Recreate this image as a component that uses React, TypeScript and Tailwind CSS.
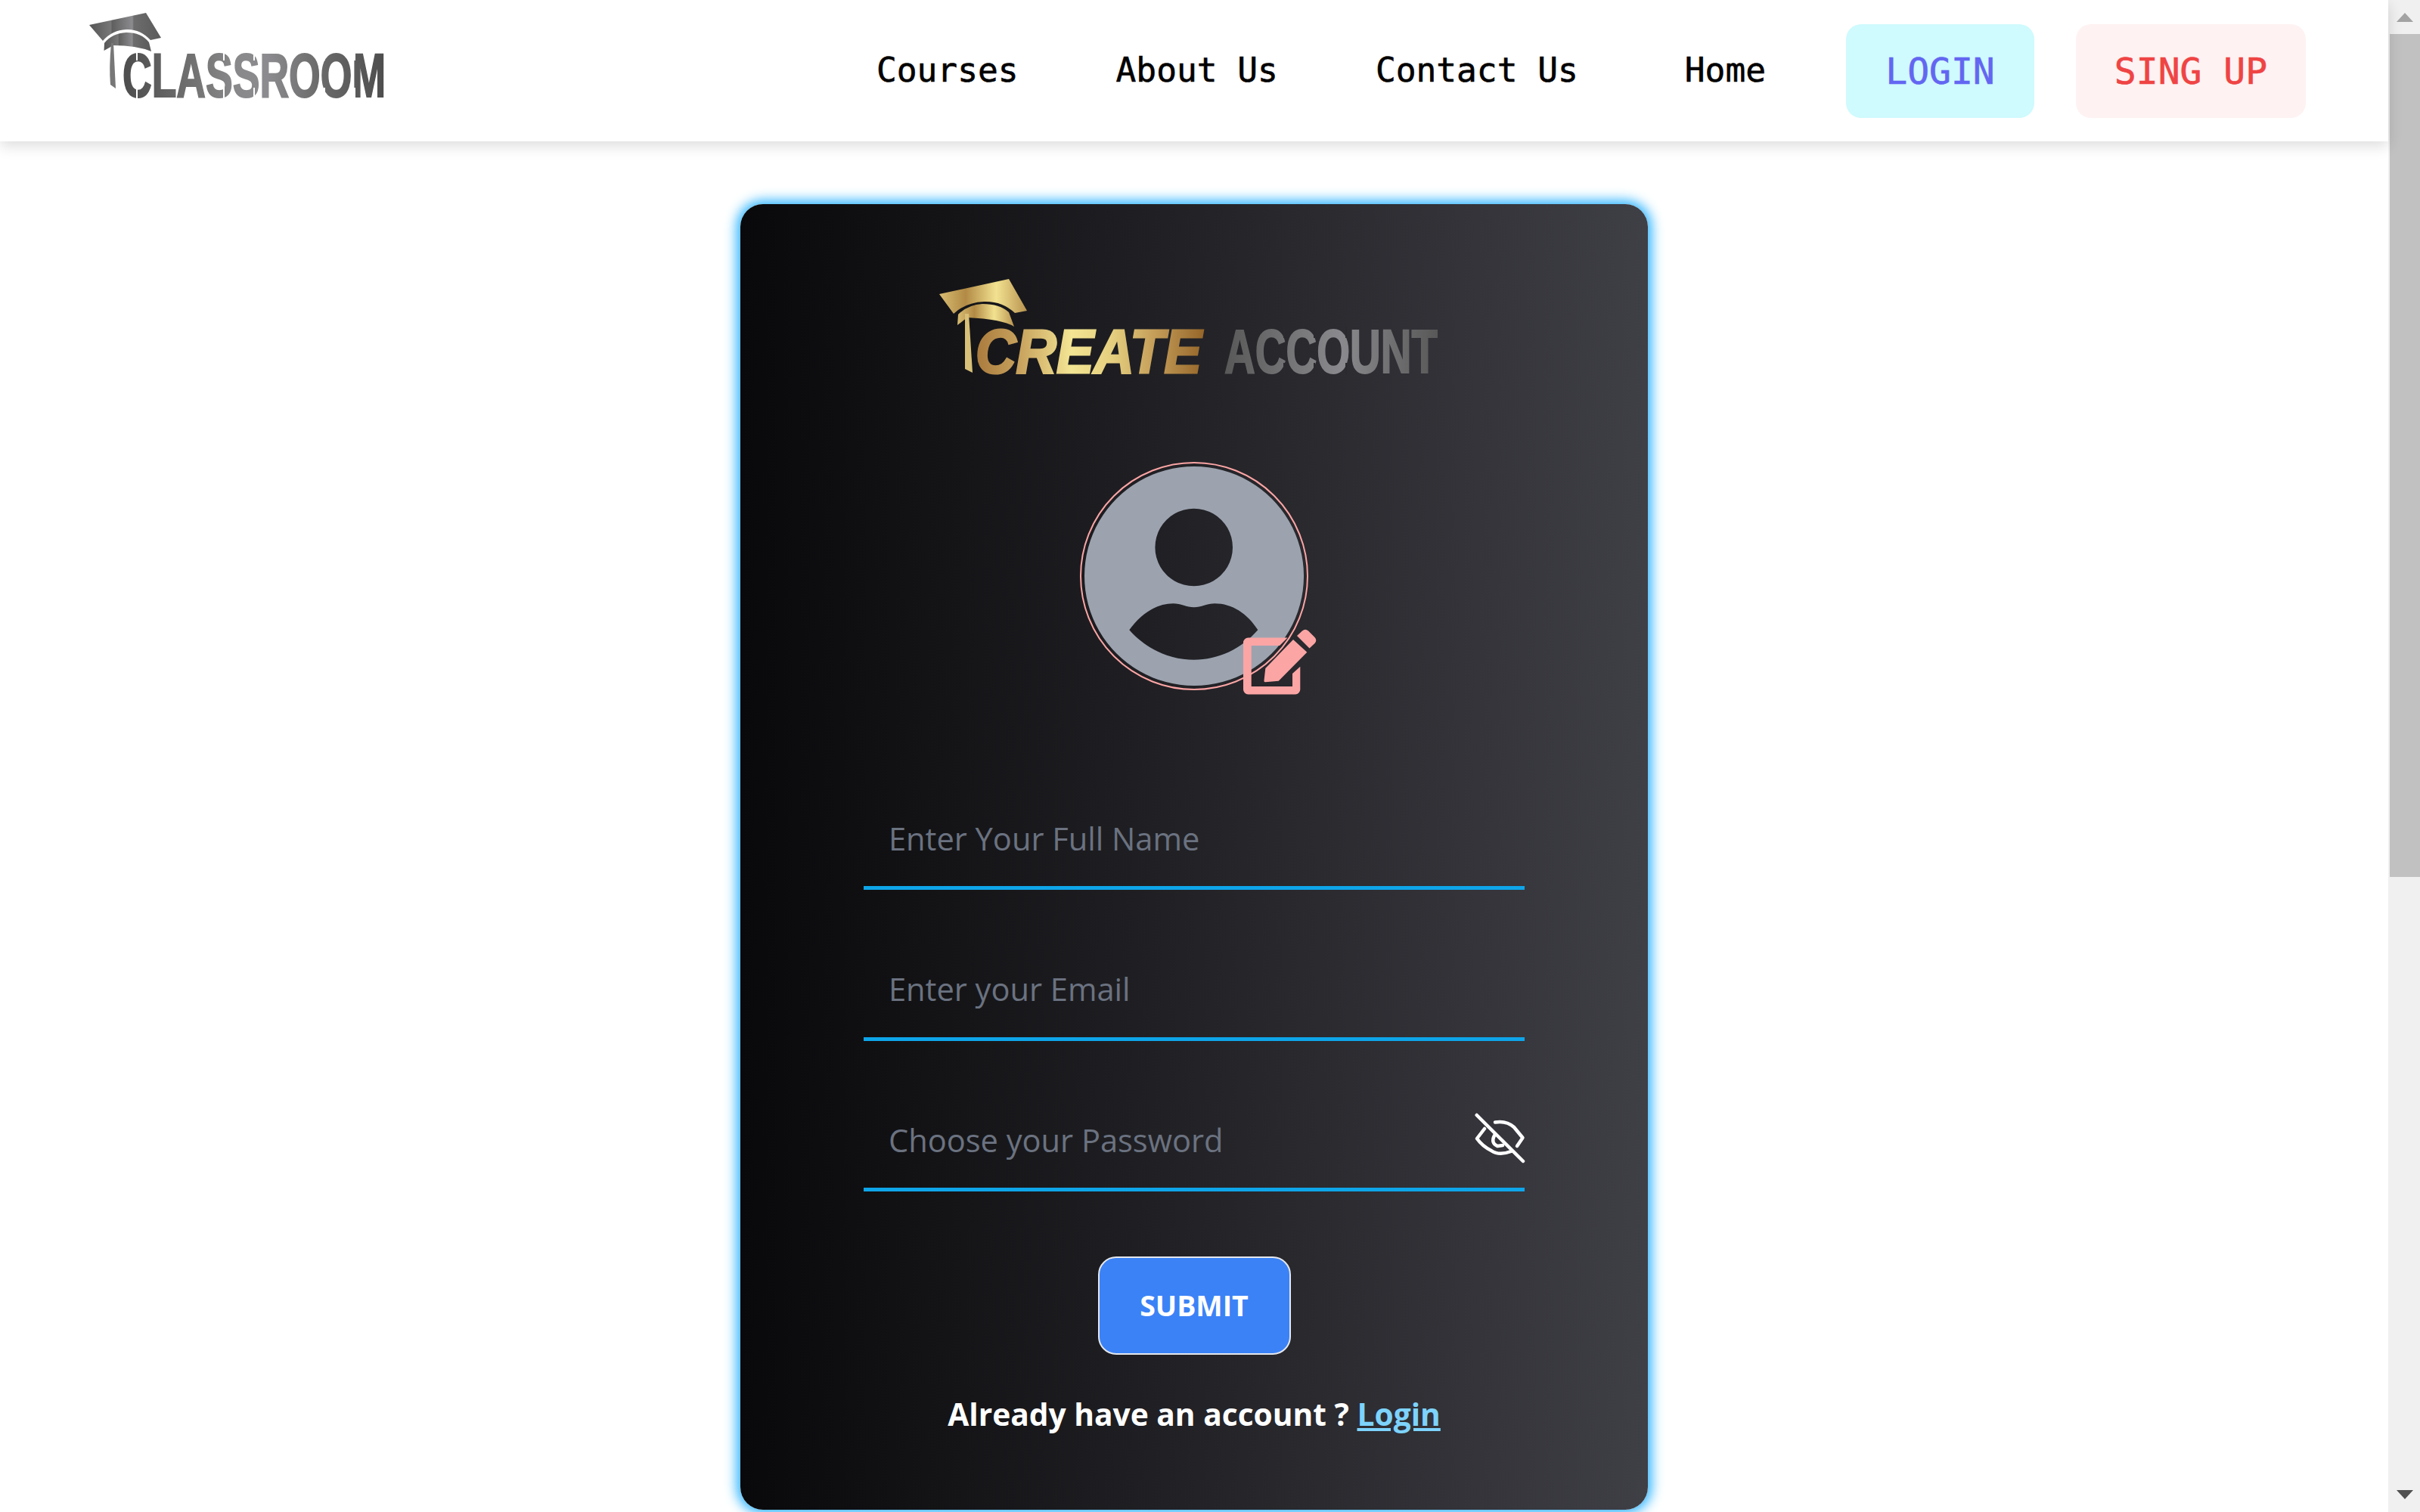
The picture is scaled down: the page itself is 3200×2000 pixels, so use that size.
import React from 'react';

const navLinks = [
  { label: 'Courses', cls: 'ml-[629px]' },
  { label: 'About Us', cls: 'ml-[129px]' },
  { label: 'Contact Us', cls: 'ml-[129px]' },
  { label: 'Home', cls: 'ml-[141px]' },
];

const inputCls =
  'h-[100px] w-full bg-transparent border-b-[5px] border-[#0ea5e9] pl-[33px] pr-[80px] pb-[32px] text-[41.6px] text-white placeholder:text-[#6b7280] outline-none';

const StencilSlits = ({ xs, top, bottom, fill }: { xs: number[]; top: number; bottom: number; fill: string }) => (
  <g fill={fill}>
    {xs.map(x => (
      <React.Fragment key={x}>
        <rect x={x} y={top - 2} width="2" height="15" />
        <rect x={x} y={bottom - 13} width="2" height="15" />
      </React.Fragment>
    ))}
  </g>
);

const ClassroomLogo = () => (
  <svg width="420" height="187" viewBox="110 0 420 187" className="shrink-0">
    <defs>
      <linearGradient id="greyBands" x1="0" x2="1" y1="0" y2="0">
        <stop offset="0" stopColor="#4d4d4d" />
        <stop offset="0.12" stopColor="#5c5c5c" />
        <stop offset="0.25" stopColor="#6f6f6f" />
        <stop offset="0.42" stopColor="#88888a" />
        <stop offset="0.55" stopColor="#8c8c90" />
        <stop offset="0.75" stopColor="#6a6a6a" />
        <stop offset="1" stopColor="#4d4d4d" />
      </linearGradient>
      <linearGradient id="greyCap" x1="0" x2="1" y1="0" y2="0">
        <stop offset="0" stopColor="#555" />
        <stop offset="0.3" stopColor="#777" />
        <stop offset="0.32" stopColor="#5f5f5f" />
        <stop offset="0.6" stopColor="#8c8c90" />
        <stop offset="0.62" stopColor="#6d6d6d" />
        <stop offset="1" stopColor="#5a5a5a" />
      </linearGradient>
    </defs>
    <path d="M118 33 L193 17 L213 50 L199 53 Q185 38 167 39 Q148 40 136 54 Z" fill="url(#greyCap)" />
    <path d="M137.5 67 L138 57 Q148 44 167 43 Q187 43 197 56 L200 68 Q180 60 150 60 Z" fill="url(#greyCap)" />
    <path d="M147 57 L150 57 L153 117 L146 112 Q144 90 147 57 Z" fill="#777" />
    <text
      x="162"
      y="128"
      textLength="348"
      lengthAdjust="spacingAndGlyphs"
      fill="url(#greyBands)"
      stroke="url(#greyBands)"
      strokeWidth="2"
      fontFamily="'Liberation Sans', sans-serif"
      fontWeight="700"
      fontSize="82"
    >
      CLASSROOM
    </text>
    <StencilSlits xs={[180, 295, 335, 428, 468]} top={67} bottom={129} fill="#fff" />
  </svg>
);

const CreateAccountLogo = () => (
  <svg width="680" height="158" viewBox="1239 362 680 158">
    <defs>
      <linearGradient id="goldBands" x1="0" x2="1" y1="0" y2="0">
        <stop offset="0" stopColor="#a97a3c" />
        <stop offset="0.2" stopColor="#c9a45f" />
        <stop offset="0.42" stopColor="#f3e593" />
        <stop offset="0.6" stopColor="#e5cf7f" />
        <stop offset="0.8" stopColor="#c29a56" />
        <stop offset="1" stopColor="#96672a" />
      </linearGradient>
      <linearGradient id="capGold" x1="0" x2="1" y1="0" y2="0">
        <stop offset="0" stopColor="#d8bd72" />
        <stop offset="0.3" stopColor="#b28a45" />
        <stop offset="0.65" stopColor="#f2e290" />
        <stop offset="1" stopColor="#b99350" />
      </linearGradient>
      <linearGradient id="stencilGrey" x1="0" x2="1" y1="0" y2="0">
        <stop offset="0" stopColor="#585858" />
        <stop offset="0.55" stopColor="#8a8a8e" />
        <stop offset="1" stopColor="#585858" />
      </linearGradient>
    </defs>
    <path d="M1242 389 L1334 369 L1358 411 L1342 414 Q1325 398 1301 399 Q1277 400 1261 415 Z" fill="url(#capGold)" />
    <path d="M1266 430 L1267 416 Q1280 403 1299 402 Q1322 402 1334 413 L1341 432 Q1325 422 1279 420 Z" fill="url(#capGold)" />
    <path d="M1276 415 L1281 415 L1286 493 L1276 488 Z" fill="#d9c078" />
    <text
      x="1290"
      y="493"
      textLength="299"
      lengthAdjust="spacingAndGlyphs"
      fill="url(#goldBands)"
      stroke="url(#goldBands)"
      strokeWidth="3"
      fontFamily="'Liberation Sans', sans-serif"
      fontWeight="700"
      fontStyle="italic"
      fontSize="82"
    >
      CREATE
    </text>
    <text
      x="1619"
      y="493"
      textLength="282"
      lengthAdjust="spacingAndGlyphs"
      fill="url(#stencilGrey)"
      stroke="url(#stencilGrey)"
      strokeWidth="2"
      fontFamily="'Liberation Sans', sans-serif"
      fontWeight="700"
      fontSize="82"
    >
      ACCOUNT
    </text>
    <StencilSlits xs={[1697, 1737, 1779]} top={434} bottom={493} fill="#29292e" />
  </svg>
);

const UserAvatar = () => (
  <svg width="290" height="290" viewBox="54.7 37.7 290 290" className="block">
    <path
      fillRule="evenodd"
      fill="#9ca3af"
      d="M199.7 37.7 a145 145 0 1 0 0.01 0 Z
         M199.4 93.4 a51.3 51.3 0 1 1 -0.01 0 Z
         M114 254 C130 232 150 219 172 219 C182 219 190 224 199.5 224 C209 224 217 219 227 219 C250 219 270 232 284 254 C262 279 232 293.5 199.5 293.5 C167 293.5 136 279 114 254 Z"
    />
  </svg>
);

const EditBadge = () => (
  <svg width="104" height="94" viewBox="260 248 104 94" className="absolute left-[210px] top-[215px]">
    <g fill="#fca5a5">
      <path d="M270.5 263.5 H322.5 L312 274 H274.7 V328 H329 V311 L339.3 301.7 V332 a6.5 6.5 0 0 1 -6.5 6.5 H270.5 a6.5 6.5 0 0 1 -6.5 -6.5 V270 a6.5 6.5 0 0 1 6.5 -6.5 Z" />
      <path d="M330 266 L348.3 282.7 L310.7 320.7 L293 322.3 Q291 322.3 291.5 320 L293.3 304 Z" />
      <path d="M335 261 L342 254.5 Q346 251 350 254.5 L358.5 263 Q362 267 358.5 271 L351.5 277.5 Z" />
    </g>
  </svg>
);

const EyeOffIcon = () => (
  <svg width="68" height="68" viewBox="20 12 68 68" fill="none" stroke="#fff" strokeWidth="4.5" strokeLinecap="round" strokeLinejoin="round">
    <path d="M22.7 15 L84 76" />
    <path d="M47 24.5 Q62 22 72 31 L83.5 45 L76 56" />
    <path d="M33 33 L23 46 Q30 56 42 62 Q52 69 68 63" />
    <path d="M46 42 Q41 52 50 56 L57 55" />
  </svg>
);

const ScrollBar = () => (
  <div className="w-[42px] shrink-0 flex flex-col bg-[#f0f0f0]">
    <div className="h-[45px] flex items-center justify-center pl-[2px]">
      <svg width="22" height="12" viewBox="0 0 22 12"><path d="M11 0 L22 12 H0 Z" fill="#a3a3a3" /></svg>
    </div>
    <div className="h-[1115px] ml-[2px] bg-[#c1c1c1]" />
    <div className="flex-1 flex items-end justify-center pl-[2px] pb-[17px]">
      <svg width="22" height="12" viewBox="0 0 22 12"><path d="M0 0 H22 L11 12 Z" fill="#505050" /></svg>
    </div>
  </div>
);

export default function App() {
  return (
    <div className="flex h-[2000px] overflow-hidden bg-white font-['Open_Sans',sans-serif]">
      <div className="flex-1 min-w-0 flex flex-col">
        <nav className="relative z-10 h-[187px] shrink-0 flex items-center bg-white pl-[110px] shadow-[0_6px_18px_rgba(0,0,0,0.14)]">
          <ClassroomLogo />
          <div className="flex items-center font-['DejaVu_Sans_Mono',monospace] text-[44.5px] text-black [-webkit-text-stroke:0.6px]">
            {navLinks.map(l => (
              <a key={l.label} className={l.cls}>{l.label}</a>
            ))}
            <button className="ml-[106px] w-[249px] h-[124px] rounded-[20px] bg-[#cffafe] text-[48px] text-[#6366f1]">LOGIN</button>
            <button className="ml-[55px] w-[304px] h-[124px] rounded-[20px] bg-[#fef2f2] text-[48px] text-[#ef4444]">SING UP</button>
          </div>
        </nav>

        <main className="flex-1 flex justify-center pt-[83px]">
          <div className="w-[1200px] h-[1727px] shrink-0 rounded-[30px] bg-gradient-to-r from-[#09090b] to-[#3f3f46] shadow-[0_0_16px_5px_#2db4ff] flex flex-col items-center">
            <div className="mt-[92px]"><CreateAccountLogo /></div>

            <div className="relative mt-[91px] w-[302px] h-[302px] shrink-0 rounded-full border-[2px] border-[#fca5a5] p-[4px]">
              <UserAvatar />
              <EditBadge />
            </div>

            <form className="mt-[164px] w-[874px] flex flex-col gap-[99.5px]">
              <input placeholder="Enter Your Full Name" className={inputCls} />
              <input placeholder="Enter your Email" className={inputCls} />
              <div className="relative">
                <input placeholder="Choose your Password" className={inputCls} />
                <span className="absolute right-[-2px] top-[-4px]"><EyeOffIcon /></span>
              </div>
            </form>

            <button className="mt-[86px] w-[255px] h-[130px] shrink-0 rounded-[24px] border-[2px] border-[#e5e7eb] bg-[#3b82f6] text-[37.5px] font-bold text-white">
              SUBMIT
            </button>

            <p className="mt-[48px] text-[40.7px] font-bold text-white">
              Already have an account ? <a className="text-[#7dd3fc] underline">Login</a>
            </p>
          </div>
        </main>
      </div>
      <ScrollBar />
    </div>
  );
}
